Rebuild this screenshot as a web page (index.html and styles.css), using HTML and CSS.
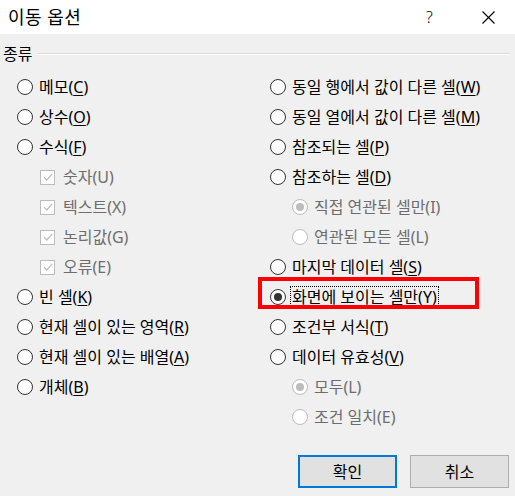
FILE: index.html
```html
<!DOCTYPE html>
<html lang="ko">
<head>
<meta charset="utf-8">
<title>이동 옵션</title>
<link rel="stylesheet" href="styles.css">
</head>
<body>
<div class="dialog">
  <div class="titlebar">
    <span class="title">이동 옵션</span>
    <span class="help">?</span>
    <span class="close"><svg width="13" height="13" viewBox="0 0 13 13"><path d="M0.5 0.5 L12.5 12.5 M12.5 0.5 L0.5 12.5" stroke="#000" stroke-width="1.1" fill="none"/></svg></span>
  </div>
  <div class="content">
    <div class="group-label"><span>종류</span><span class="group-line"></span></div>
    <div class="columns">
      <div class="col">
        <div class="row"><span class="radio"></span><span>메모(<u>C</u>)</span></div>
        <div class="row"><span class="radio"></span><span>상수(<u>O</u>)</span></div>
        <div class="row"><span class="radio"></span><span>수식(<u>F</u>)</span></div>
        <div class="row sub disabled"><span class="check"><svg width="12" height="12" viewBox="0 0 12 12"><path d="M2 6.2 L4.8 9 L10.2 2.8" stroke="#bcbcbc" stroke-width="1.2" fill="none"/></svg></span><span>숫자(U)</span></div>
        <div class="row sub disabled"><span class="check"><svg width="12" height="12" viewBox="0 0 12 12"><path d="M2 6.2 L4.8 9 L10.2 2.8" stroke="#bcbcbc" stroke-width="1.2" fill="none"/></svg></span><span>텍스트(X)</span></div>
        <div class="row sub disabled"><span class="check"><svg width="12" height="12" viewBox="0 0 12 12"><path d="M2 6.2 L4.8 9 L10.2 2.8" stroke="#bcbcbc" stroke-width="1.2" fill="none"/></svg></span><span>논리값(G)</span></div>
        <div class="row sub disabled"><span class="check"><svg width="12" height="12" viewBox="0 0 12 12"><path d="M2 6.2 L4.8 9 L10.2 2.8" stroke="#bcbcbc" stroke-width="1.2" fill="none"/></svg></span><span>오류(E)</span></div>
        <div class="row"><span class="radio"></span><span>빈 셀(<u>K</u>)</span></div>
        <div class="row"><span class="radio"></span><span>현재 셀이 있는 영역(<u>R</u>)</span></div>
        <div class="row"><span class="radio"></span><span>현재 셀이 있는 배열(<u>A</u>)</span></div>
        <div class="row"><span class="radio"></span><span>개체(<u>B</u>)</span></div>
      </div>
      <div class="col">
        <div class="row"><span class="radio"></span><span>동일 행에서 값이 다른 셀(<u>W</u>)</span></div>
        <div class="row"><span class="radio"></span><span>동일 열에서 값이 다른 셀(<u>M</u>)</span></div>
        <div class="row"><span class="radio"></span><span>참조되는 셀(<u>P</u>)</span></div>
        <div class="row"><span class="radio"></span><span>참조하는 셀(<u>D</u>)</span></div>
        <div class="row sub disabled"><span class="radio checked"></span><span>직접 연관된 셀만(I)</span></div>
        <div class="row sub disabled"><span class="radio"></span><span>연관된 모든 셀(L)</span></div>
        <div class="row"><span class="radio"></span><span>마지막 데이터 셀(<u>S</u>)</span></div>
        <div class="row highlighted"><span class="radio checked"></span><span class="focus">화면에 보이는 셀만(<u>Y</u>)</span></div>
        <div class="row"><span class="radio"></span><span>조건부 서식(<u>T</u>)</span></div>
        <div class="row"><span class="radio"></span><span>데이터 유효성(<u>V</u>)</span></div>
        <div class="row sub disabled"><span class="radio checked"></span><span>모두(L)</span></div>
        <div class="row sub disabled"><span class="radio"></span><span>조건 일치(E)</span></div>
      </div>
    </div>
    <div class="buttons">
      <button class="btn default">확인</button>
      <button class="btn">취소</button>
    </div>
  </div>
</div>
</body>
</html>
```

FILE: styles.css
```css
html, body {
  margin: 0;
  padding: 0;
}
body {
  width: 515px;
  height: 496px;
  overflow: hidden;
  background: #f0f0f0;
  font-family: "Noto Sans", "Noto Sans CJK KR", sans-serif;
  font-size: 16px;
  color: #000;
}
.dialog {
  display: flex;
  flex-direction: column;
}
.titlebar {
  height: 34px;
  background: #fff;
  display: flex;
  align-items: center;
  padding-left: 8px;
}
.title {
  font-size: 18px;
  line-height: 22px;
  letter-spacing: 0.5px;
  flex: 1;
}
.help {
  font-size: 16px;
  line-height: 20px;
  width: 10px;
  margin-right: 46px;
  font-weight: 300;
}
.close {
  display: flex;
  margin-right: 20px;
}
.content {
  display: flex;
  flex-direction: column;
}
.group-label {
  display: flex;
  align-items: center;
  height: 20px;
  margin-top: 10px;
  padding-left: 3px;
  padding-right: 5px;
  line-height: 20px;
}
.group-line {
  flex: 1;
  margin-left: 5px;
  height: 0;
  border-top: 1px solid #dcdcdc;
  border-bottom: 1px solid #fff;
}
.columns {
  display: grid;
  grid-template-columns: 253px 1fr;
  padding-left: 17px;
  margin-top: 8px;
}
.col {
  display: flex;
  flex-direction: column;
}
.row {
  height: 30px;
  display: flex;
  align-items: center;
  line-height: 20px;
  white-space: nowrap;
}
.row.sub {
  padding-left: 22px;
}
.col:first-child .row.sub {
  padding-left: 23px;
}
.radio {
  width: 14px;
  height: 14px;
  border: 1px solid #333;
  border-radius: 50%;
  background: #fff;
  margin-right: 6px;
  flex: none;
  display: flex;
  align-items: center;
  justify-content: center;
}
.radio.checked::after {
  content: "";
  width: 8px;
  height: 8px;
  border-radius: 50%;
  background: #333;
}
.disabled {
  color: #6d6d6d;
}
.disabled .radio {
  border-color: #bcbcbc;
}
.disabled .radio.checked::after {
  background: #bcbcbc;
}
.check {
  width: 13px;
  height: 13px;
  border: 1px solid #bcbcbc;
  background: #fff;
  margin-right: 8px;
  flex: none;
  display: flex;
  align-items: center;
  justify-content: center;
}
u {
  text-decoration-thickness: 1px;
  text-underline-offset: 2px;
}
.highlighted {
  position: relative;
}
.highlighted::before {
  content: "";
  position: absolute;
  left: -12px;
  top: -5px;
  width: 213px;
  height: 24px;
  border: 4px solid #f00;
}
.focus {
  outline: 1px dotted #000;
  outline-offset: 0;
  padding: 0 1px;
  margin-left: -1px;
}
.buttons {
  display: flex;
  justify-content: flex-end;
  gap: 13px;
  padding-right: 6px;
  margin-top: 23px;
}
.btn {
  width: 99px;
  height: 33px;
  background: #e1e1e1;
  border: 1px solid #adadad;
  font-family: "Noto Sans", "Noto Sans CJK KR", sans-serif;
  font-size: 16px;
  color: #000;
  padding: 0;
  line-height: 20px;
}
.btn.default {
  border: 2px solid #0078d7;
}
```
